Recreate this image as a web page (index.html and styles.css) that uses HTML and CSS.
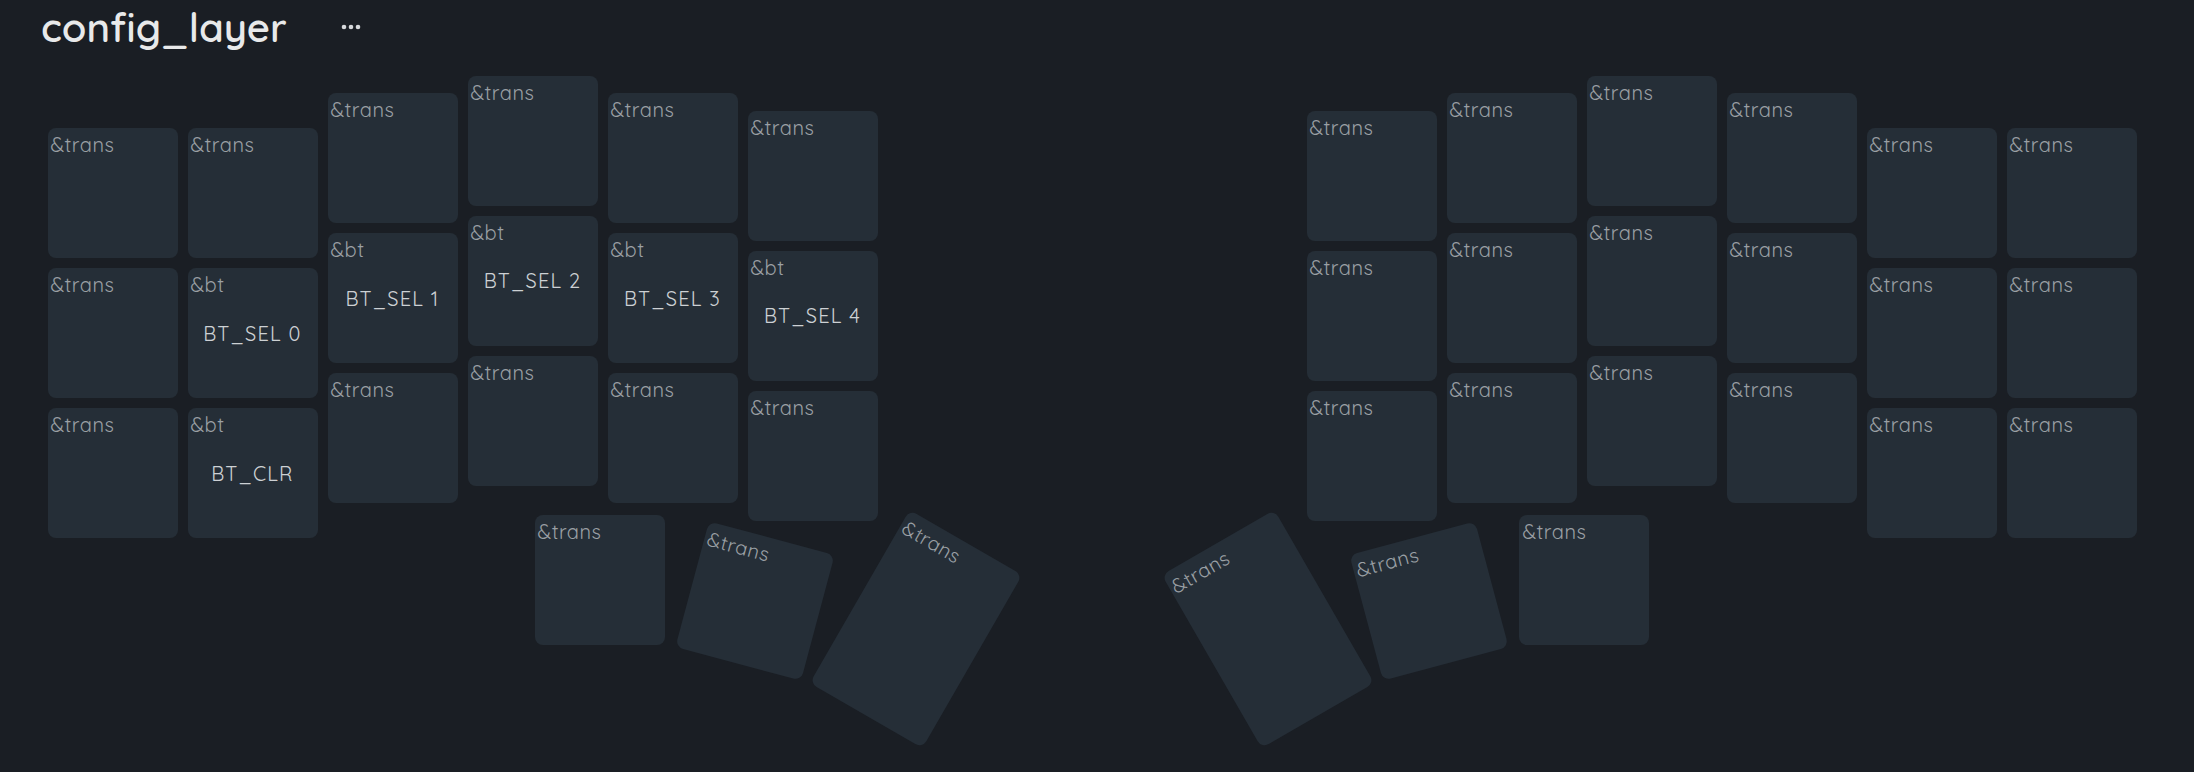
FILE: index.html
```html
<!DOCTYPE html>
<html lang="en">
<head>
    <meta charset="UTF-8">
    <meta name="viewport" content="width=device-width, initial-scale=1.0">
    <title>config_layer</title>
    <link rel="stylesheet" href="styles.css">
</head>
<body>

<div class="header">
    <h1 class="title">config_layer</h1>
    <button class="menu-btn" title="Layer options">
        <svg width="20" height="6" viewBox="0 0 20 6">
            <circle cx="3" cy="3" r="2.3" fill="#d6d8db"/>
            <circle cx="10" cy="3" r="2.3" fill="#d6d8db"/>
            <circle cx="17" cy="3" r="2.3" fill="#d6d8db"/>
        </svg>
    </button>
</div>

<div class="board" id="board"></div>

<script>
    // one key unit in px, keys are one unit minus the gap
    const U = 140;
    const GAP = 10;
    const OX = 47.5;
    const OY = 23.5;
    const AXIS = 1092;

    // column stagger of each half, outer column first
    const stagger = [0.375, 0.375, 0.125, 0, 0.125, 0.25];

    const T = '&trans';
    const leftRows = [
        [T, T, T, T, T, T],
        [T, ['&bt', 'BT_SEL 0'], ['&bt', 'BT_SEL 1'], ['&bt', 'BT_SEL 2'], ['&bt', 'BT_SEL 3'], ['&bt', 'BT_SEL 4']],
        [T, ['&bt', 'BT_CLR'], T, T, T, T]
    ];
    const rightRows = [
        [T, T, T, T, T, T],
        [T, T, T, T, T, T],
        [T, T, T, T, T, T]
    ];

    // thumbs, inner key last: x, y, w, h, rotation (left half)
    const thumbs = [
        { x: 3.479, y: 3.139, w: 1, h: 1, r: 0 },
        { x: 4.586, y: 3.289, w: 1, h: 1, r: 15 },
        { x: 5.736, y: 3.239, w: 1, h: 1.5, r: 30 }
    ];

    const board = document.getElementById('board');

    function addKey(left, top, width, height, rot, binding) {
        const key = document.createElement('div');
        key.className = 'key';
        key.style.left = left + 'px';
        key.style.top = top + 'px';
        key.style.width = width + 'px';
        key.style.height = height + 'px';
        if (rot) key.style.transform = 'rotate(' + rot + 'deg)';

        const legend = document.createElement('span');
        legend.className = 'legend';
        const parts = Array.isArray(binding) ? binding : [binding];
        legend.textContent = parts[0];
        key.appendChild(legend);

        if (parts[1]) {
            const param = document.createElement('span');
            param.className = 'param';
            param.textContent = parts[1];
            key.appendChild(param);
        }
        board.appendChild(key);
    }

    function place(k, binding, mirror) {
        const width = k.w * U - GAP;
        const height = k.h * U - GAP;
        let left = OX + k.x * U;
        const top = OY + k.y * U;
        let rot = k.r || 0;
        if (mirror) {
            left = AXIS * 2 - left - width;
            rot = -rot;
        }
        addKey(left, top, width, height, rot, binding);
    }

    leftRows.forEach(function (row, r) {
        row.forEach(function (binding, c) {
            place({ x: c, y: r + stagger[c], w: 1, h: 1 }, binding, false);
        });
    });

    rightRows.forEach(function (row, r) {
        row.forEach(function (binding, c) {
            // right half is listed left to right, so the outer column is last
            const mc = 5 - c;
            place({ x: mc, y: r + stagger[mc], w: 1, h: 1 }, binding, true);
        });
    });

    thumbs.forEach(function (k) {
        place(k, T, false);
        place(k, T, true);
    });
</script>

</body>
</html>
```

FILE: styles.css
```css
body {
    margin: 0;
    background-color: #1a1e24;
    font-family: "Quicksand", Lato, "Noto Sans", sans-serif;
    color: #d0d3d6;
    height: 100vh;
    overflow: hidden;
}
.header {
    display: flex;
    align-items: center;
    height: 50px;
    padding: 2px 0 0 41px;
}
.title {
    margin: 0;
    font-size: 40px;
    line-height: 40px;
    font-weight: 600;
    color: #e8e9ea;
}
.menu-btn {
    margin-left: 50px;
    padding: 4px;
    background: none;
    border: none;
    cursor: pointer;
    display: flex;
}
.board {
    position: relative;
    height: 720px;
}
.key {
    position: absolute;
    box-sizing: border-box;
    background-color: #252e37;
    border-radius: 8px;
    display: flex;
    align-items: center;
    justify-content: center;
    transform-origin: center;
}
.key .legend {
    position: absolute;
    top: 5px;
    left: 3px;
    font-size: 20px;
    line-height: 24px;
    letter-spacing: 0.5px;
    color: #9ba0a5;
}
.key .param {
    font-size: 20px;
    letter-spacing: 1.2px;
    color: #cdd1d4;
}
```
